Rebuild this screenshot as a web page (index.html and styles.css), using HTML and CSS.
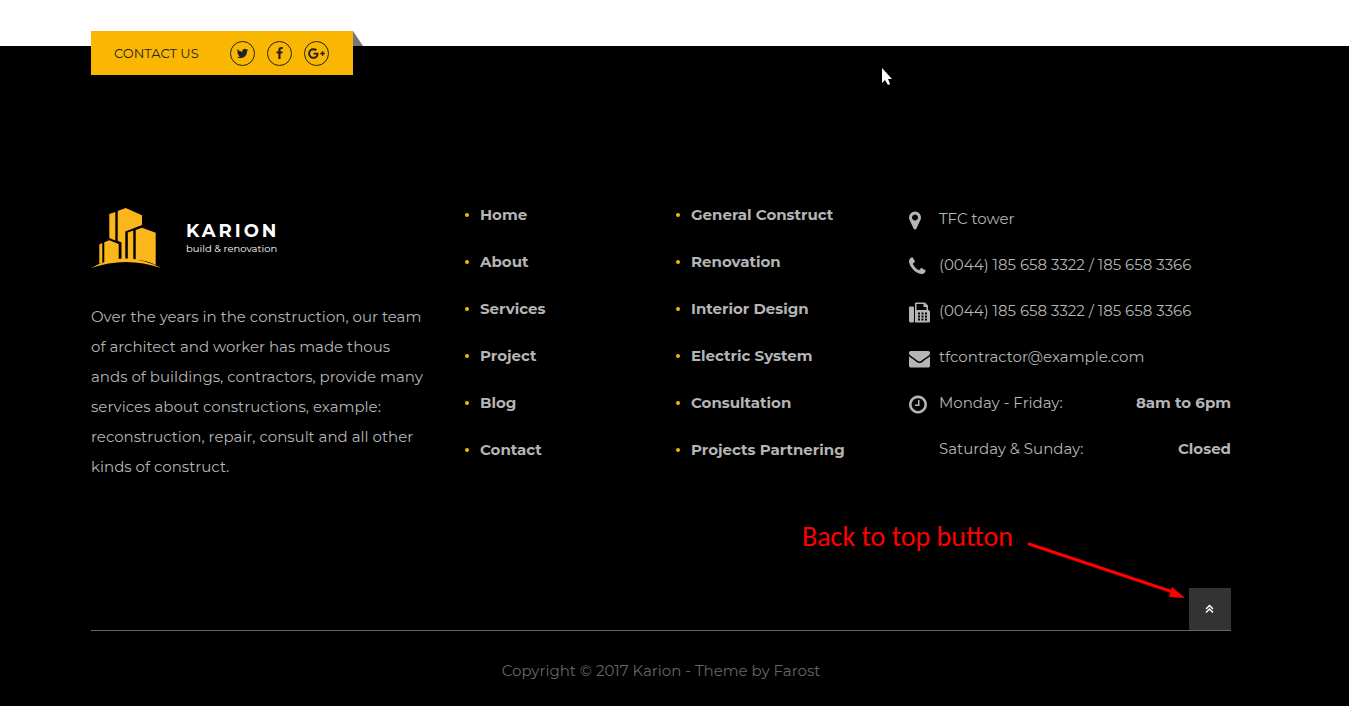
FILE: index.html
```html
<!DOCTYPE html>
<html lang="en">
<head>
<meta charset="utf-8">
<meta name="viewport" content="width=device-width, initial-scale=1">
<title>Karion - build &amp; renovation</title>
<link rel="stylesheet" href="styles.css">
</head>
<body>
<footer class="footer">
  <div class="container">
    <div class="contact-tab">
      <span class="contact-label">CONTACT US</span>
      <div class="social">
        <a href="#" aria-label="Twitter"><svg width="13" height="13" viewBox="0 0 1792 1792"><path d="M1684 408q-67 98-162 167 1 14 1 42 0 130-38 259.500t-115.500 248.500-184.500 210.500-258 146-323 54.500q-271 0-496-145 35 4 78 4 225 0 401-138-105-2-188-64.500t-114-159.500q33 5 61 5 43 0 85-11-112-23-185.500-111.500t-73.500-205.500v-4q68 38 146 41-66-44-105-115t-39-154q0-88 44-163 121 149 294.500 238.500t371.500 99.500q-8-38-8-74 0-134 94.500-228.500t228.500-94.500q140 0 236 102 109-21 205-78-37 115-142 178 93-10 186-50z"/></svg></a>
        <a href="#" aria-label="Facebook"><svg width="13" height="13" viewBox="0 0 1792 1792"><path d="M1343 12v264h-157q-86 0-116 36t-30 108v189h293l-39 296h-254v759h-306v-759h-255v-296h255v-218q0-186 104-288.500t277-102.500q147 0 228 12z"/></svg></a>
        <a href="#" aria-label="Google Plus"><svg width="17" height="13" viewBox="-256 0 2304 1792"><path d="M1181 913q0 208-87 370.500t-248 254-369 91.500q-149 0-285-58t-234-156-156-234-58-285 58-285 156-234 234-156 285-58q286 0 491 192l-199 191q-117-113-292-113-123 0-227.500 62t-165.500 168.500-61 232.500 61 232.500 165.500 168.500 227.500 62q83 0 152.500-23t114.500-57.500 78.500-78.500 49-83 21.500-74h-416v-252h692q12 63 12 122zm867-122v210h-209v209h-210v-209h-209v-210h209v-209h210v209h209z"/></svg></a>
      </div>
    </div>

    <div class="columns">
      <section class="about">
        <a class="logo" href="#">
          <svg class="logo-mark" width="70" height="62" viewBox="0 0 70 62" aria-hidden="true">
            <path d="M18.300 7L24.300 5V33.500L18.300 31zM26.700 4L34.700 1 51 8.300V18L34.300 24.500V53H30.500V35.500L26.700 33.700zM8.300 37.500L11.300 36V56L8.300 57zM13.300 35.300L18.300 33.300 27.700 37V53L13.300 56zM36.800 25.500L42.300 23.500V53H36.800zM44.700 23L51 20.700 64.700 25.700V58Q55 53 44.700 53z"/>
            <path d="M0 61Q34 42 70 61Q35 49 0 61z"/>
          </svg>
          <span class="logo-text"><strong>KARION</strong><small>build &amp; renovation</small></span>
        </a>
        <p>Over the years in the construction, our team<br>of architect and worker has made thous<br>ands of buildings, contractors, provide many<br>services about constructions, example:<br>reconstruction, repair, consult and all other<br>kinds of construct.</p>
      </section>

      <nav aria-label="Pages">
        <ul class="links">
          <li><a href="#">Home</a></li>
          <li><a href="#">About</a></li>
          <li><a href="#">Services</a></li>
          <li><a href="#">Project</a></li>
          <li><a href="#">Blog</a></li>
          <li><a href="#">Contact</a></li>
        </ul>
      </nav>

      <nav aria-label="Services">
        <ul class="links">
          <li><a href="#">General Construct</a></li>
          <li><a href="#">Renovation</a></li>
          <li><a href="#">Interior Design</a></li>
          <li><a href="#">Electric System</a></li>
          <li><a href="#">Consultation</a></li>
          <li><a href="#">Projects Partnering</a></li>
        </ul>
      </nav>

      <ul class="info">
        <li><svg width="21" height="21" viewBox="384 0 1792 1792"><path d="M1152 640q0-106-75-181t-181-75-181 75-75 181 75 181 181 75 181-75 75-181zm256 0q0 109-33 179l-364 774q-16 33-47.500 52t-67.500 19-67.500-19-46.500-52l-365-774q-33-70-33-179 0-212 150-362t362-150 362 150 150 362z"/></svg><span>TFC tower</span></li>
        <li><svg width="21" height="21" viewBox="192 0 1792 1792"><path d="M1600 1240q0 27-10 70.500t-21 68.500q-21 50-122 106-94 51-186 51-27 0-52.500-3.500t-57.500-12.500-47.500-14.500-55.500-20.500-49-18q-98-35-175-83-128-79-264.500-215.500t-215.500-264.500q-48-77-83-175-3-9-18-49t-20.500-55.500-14.500-47.500-12.500-57.500-3.500-52.500q0-92 51-186 56-101 106-122 25-11 68.500-21t70.500-10q14 0 21 3 18 6 53 76 11 19 30 54t35 63.500 31 53.500q3 4 17.500 25t21.500 35.500 7 28.500q0 20-28.500 50t-62 55-62 53-28.500 46q0 9 5 22.500t8.500 20.500 14 24 11.500 19q76 137 174 235t235 174q2 1 19 11.500t24 14 20.500 8.500 22.500 5q18 0 46-28.500t53-62 55-62 50-28.500q14 0 28.500 7t35.500 21.500 25 17.500q25 15 53.500 31t63.500 35 54 30q70 35 76 53 3 7 3 21z"/></svg><span>(0044) 185 658 3322 / 185 658 3366</span></li>
        <li><svg width="21" height="21" viewBox="0 0 21 21"><path fill-rule="evenodd" d="M1 4.500h3q1 0 1 1v14q0 1-1 1H1.500Q0 20.500 0 19V5.500q0-1 1-1zM7 .500h9l3 3V8q2 0 2 2v9q0 1.500-1.500 1.500H6V1.500q0-1 1-1zM7.500 2v6h10V5H14.500V2zM9 10.500v2h2v-2zm3.500 0v2h2v-2zm3.500 0v2h2v-2zm-7 3v2h2v-2zm3.500 0v2h2v-2zm3.500 0v2h2v-2zm-7 3v2h2v-2zm3.500 0v2h2v-2zm3.500 0v2h2v-2z"/></svg><span>(0044) 185 658 3322 / 185 658 3366</span></li>
        <li><svg width="21" height="21" viewBox="0 0 1792 1792"><path d="M1792 710v794q0 66-47 113t-113 47h-1472q-66 0-113-47t-47-113v-794q44 49 101 87 362 246 497 345 57 42 92.500 65.500t94.500 48 110 24.500h2q51 0 110-24.500t94.500-48 92.500-65.500q170-123 498-345 57-39 100-87zm0-294q0 79-49 151t-122 123q-376 261-468 325-10 7-42.500 31t-54 38.500-52 32.500-57.500 27-50 9h-2q-23 0-50-9t-57.500-27-52-32.500-54-38.500-42.500-31q-91-64-262-182.500t-205-142.500q-62-42-117-115.500t-55-136.500q0-78 41.500-130t118.500-52h1472q65 0 112.500 47t47.500 113z"/></svg><a href="#">tfcontractor@example.com</a></li>
        <li><svg width="21" height="21" viewBox="128 0 1792 1792"><path d="M1024 544v448q0 14-9 23t-23 9h-320q-14 0-23-9t-9-23v-64q0-14 9-23t23-9h224v-352q0-14 9-23t23-9h64q14 0 23 9t9 23zm416 352q0-148-73-273t-198-198-273-73-273 73-198 198-73 273 73 273 198 198 273 73 273-73 198-198 73-273zm224 0q0 209-103 385.500t-279.500 279.500-385.500 103-385.500-103-279.500-279.500-103-385.500 103-385.500 279.500-279.500 385.500-103 385.500 103 279.500 279.500 103 385.500z"/></svg><span>Monday - Friday:</span><strong>8am to 6pm</strong></li>
        <li><span class="no-icon">Saturday &amp; Sunday:</span><strong>Closed</strong></li>
      </ul>
    </div>

    <div class="top-row">
      <button class="to-top" type="button" aria-label="Back to top"><svg width="10" height="10" viewBox="0 0 10 10"><path d="M1 5L4.500 1.500 8 5M1 8.500L4.500 5 8 8.500"/></svg></button>
    </div>
    <p class="copyright">Copyright © 2017 Karion - Theme by Farost</p>
  </div>

  <div class="note">
    <span>Back to top button</span>
    <svg width="158" height="62" viewBox="0 0 158 62" aria-hidden="true"><path class="note-line" d="M2 7L146 55"/><path class="note-head" d="M145 50L158 61L142 60z"/></svg>
  </div>
  <svg class="cursor" width="12" height="20" viewBox="0 0 12 20" aria-hidden="true"><path d="M1 1V16L4 13L7 18L9 17L7 12H11z"/></svg>
</footer>
</body>
</html>
```
FILE: styles.css
```css
* {
  box-sizing: border-box;
}

body {
  margin: 0;
  padding-top: 46px;
  background: #fff;
  font-family: Montserrat, Inter, "Liberation Sans", sans-serif;
  font-size: 15px;
  line-height: 30px;
  color: #b5b5b5;
}

a {
  color: inherit;
  text-decoration: none;
}

ul,
p {
  margin: 0;
  padding: 0;
  list-style: none;
}

.footer {
  position: relative;
  min-height: calc(100vh - 46px);
  background: #000;
}

.container {
  display: flow-root;
  margin: 0 118px 0 91px;
}

.contact-tab {
  position: relative;
  display: flex;
  align-items: center;
  gap: 30px;
  width: max-content;
  height: 44px;
  margin-top: -15px;
  padding: 0 24px 0 23px;
  background: #fab702;
  color: #222;
  font-size: 13px;
}

.contact-tab::after {
  content: "";
  position: absolute;
  left: 100%;
  top: 0;
  width: 10px;
  height: 15px;
  background: #777;
  clip-path: polygon(0 0, 100% 100%, 0 100%);
}

.contact-label {
  width: 86px;
  white-space: nowrap;
}

.social {
  display: flex;
  gap: 12px;
}

.social a {
  display: grid;
  place-items: center;
  width: 25px;
  height: 25px;
  border: 1px solid #222;
  border-radius: 50%;
}

.social svg {
  fill: #222;
}

.columns {
  display: grid;
  grid-template-columns: 374fr 211fr 233fr 322fr;
  align-items: start;
  margin-top: 125px;
}

.logo {
  display: flex;
  align-items: center;
  gap: 25px;
  margin-top: 7px;
  color: #fff;
}

.logo-mark {
  fill: #fbb61b;
}

.logo-text {
  display: flex;
  flex-direction: column;
  padding-top: 2px;
}

.logo-text strong {
  font-size: 18px;
  line-height: 20px;
  letter-spacing: 3px;
}

.logo-text small {
  font-size: 10px;
  line-height: 16px;
}

.about p {
  margin-top: 33px;
  white-space: nowrap;
}

.links {
  display: grid;
  gap: 17px;
}

.links li {
  display: flex;
  align-items: center;
  gap: 11px;
  font-weight: 700;
  white-space: nowrap;
}

.links li::before {
  content: "";
  width: 4px;
  height: 4px;
  border-radius: 50%;
  background: #fab702;
}

.info {
  display: grid;
  gap: 16px;
  margin-top: 4px;
}

.info li {
  display: flex;
  gap: 9px;
  white-space: nowrap;
}

.info svg {
  margin-top: 6px;
  fill: #b5b5b5;
}

.info strong {
  margin-left: auto;
  font-weight: 700;
}

.no-icon {
  padding-left: 30px;
}

.top-row {
  display: flex;
  justify-content: flex-end;
  margin-top: 106px;
  border-bottom: 1px solid #666;
}

.to-top {
  display: grid;
  place-items: center;
  width: 42px;
  height: 42px;
  padding: 0;
  border: 0;
  background: #333;
}

.to-top path {
  fill: none;
  stroke: #fff;
  stroke-width: 1.5;
}

.copyright {
  padding: 25px 0 20px;
  text-align: center;
  color: #666;
}

.note {
  position: absolute;
  right: 164px;
  top: 491px;
  display: flex;
  align-items: flex-start;
  gap: 14px;
  color: #f00;
}

.note span {
  margin-top: -15px;
  font-family: Calibri, Carlito, "Open Sans", sans-serif;
  font-size: 28px;
  white-space: nowrap;
}

.note-line {
  stroke: #f00;
  stroke-width: 3;
  stroke-linecap: round;
}

.note-head {
  fill: #f00;
}

.cursor {
  position: absolute;
  left: 881px;
  top: 21px;
  fill: #fff;
}
```
